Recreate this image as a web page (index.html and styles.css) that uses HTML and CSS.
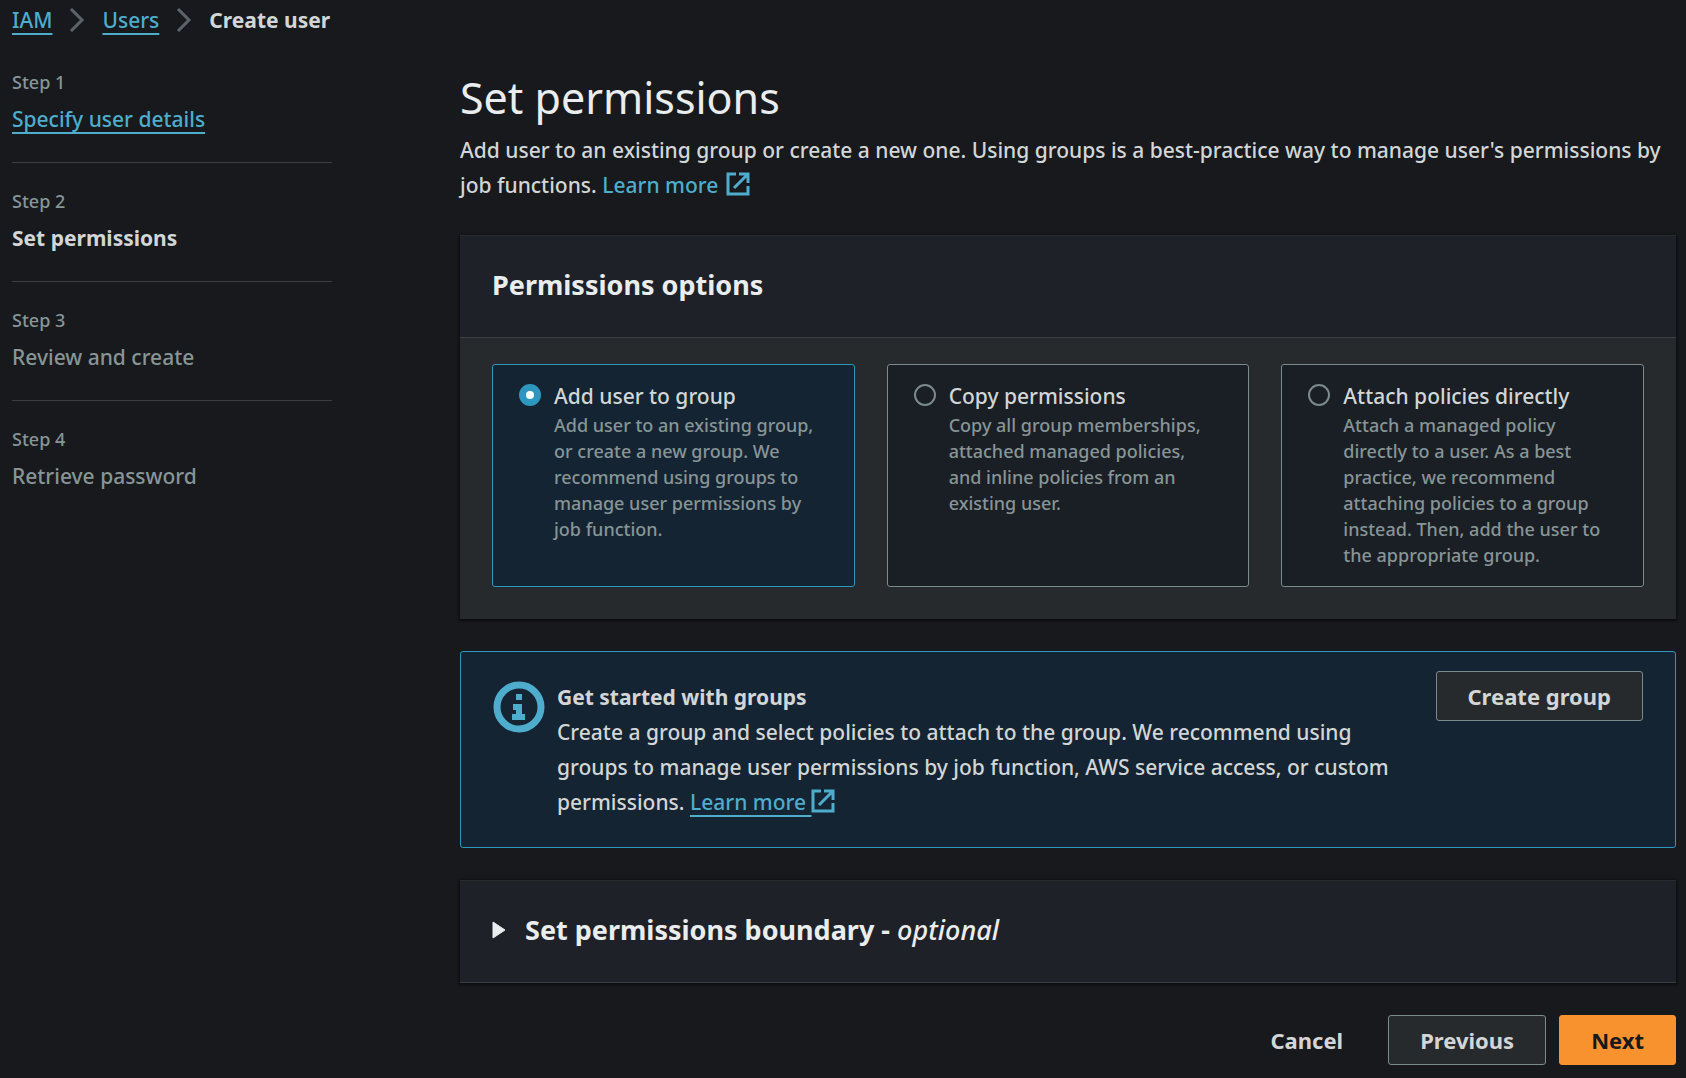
FILE: index.html
```html
<!DOCTYPE html>
<html lang="en">
<head>
<meta charset="utf-8">
<meta name="viewport" content="width=device-width, initial-scale=1">
<title>Create user | IAM</title>
<link rel="stylesheet" href="styles.css">
</head>
<body>
<svg class="sprite" aria-hidden="true">
  <symbol id="chevron" viewBox="0 0 16 24"><path d="M2 1 L13 12 L2 23" fill="none" stroke="currentColor" stroke-width="3"/></symbol>
  <symbol id="external" viewBox="0 0 24 24"><path d="M10 2 H2 V22 H22 V14 M13 2 H22 V11 M22 2 L8 16" fill="none" stroke="currentColor" stroke-width="3"/></symbol>
</svg>

<nav class="breadcrumbs" aria-label="Breadcrumbs">
  <a class="link" href="#iam">IAM</a>
  <svg class="chevron" aria-hidden="true"><use href="#chevron"/></svg>
  <a class="link" href="#users">Users</a>
  <svg class="chevron" aria-hidden="true"><use href="#chevron"/></svg>
  <span class="current">Create user</span>
</nav>

<div class="wizard">
  <ol class="steps">
    <li class="step"><span class="step-number">Step 1</span><a class="step-name link" href="#details">Specify user details</a></li>
    <li class="step"><span class="step-number">Step 2</span><span class="step-name current">Set permissions</span></li>
    <li class="step"><span class="step-number">Step 3</span><span class="step-name">Review and create</span></li>
    <li class="step"><span class="step-number">Step 4</span><span class="step-name">Retrieve password</span></li>
  </ol>

  <main class="content">
    <header class="intro">
      <h1>Set permissions</h1>
      <p>Add user to an existing group or create a new one. Using groups is a best-practice way to manage user's permissions by job functions. <a class="more" href="#learn">Learn more <svg class="external" aria-hidden="true"><use href="#external"/></svg></a></p>
    </header>

    <section class="panel">
      <h2 class="panel-header">Permissions options</h2>
      <div class="tiles">
        <label class="tile">
          <input class="radio" type="radio" name="permissions" checked>
          <span class="tile-text"><span class="tile-title">Add user to group</span><span class="tile-note">Add user to an existing group, or create a new group. We recommend using groups to manage user permissions by job function.</span></span>
        </label>
        <label class="tile">
          <input class="radio" type="radio" name="permissions">
          <span class="tile-text"><span class="tile-title">Copy permissions</span><span class="tile-note">Copy all group memberships, attached managed policies, and inline policies from an existing user.</span></span>
        </label>
        <label class="tile">
          <input class="radio" type="radio" name="permissions">
          <span class="tile-text"><span class="tile-title">Attach policies directly</span><span class="tile-note">Attach a managed policy directly to a user. As a best practice, we recommend attaching policies to a group instead. Then, add the user to the appropriate group.</span></span>
        </label>
      </div>
    </section>

    <section class="alert">
      <svg class="info" viewBox="0 0 52 52" aria-hidden="true">
        <circle cx="26" cy="26" r="22" fill="none" stroke="currentColor" stroke-width="7"/>
        <path d="M23 13h6v6h-6zM20 23h9v10h3v6H19v-6h4v-4h-3z" fill="currentColor"/>
      </svg>
      <div class="alert-text">
        <strong>Get started with groups</strong>
        <p>Create a group and select policies to attach to the group. We recommend using groups to manage user permissions by job function, AWS service access, or custom permissions. <a class="more" href="#groups"><span class="link">Learn more </span><svg class="external" aria-hidden="true"><use href="#external"/></svg></a></p>
      </div>
      <button class="button" type="button">Create group</button>
    </section>

    <section class="panel">
      <h2 class="panel-header">
        <button class="expander" type="button" aria-expanded="false">
          <svg class="caret" viewBox="0 0 14 18" aria-hidden="true"><path d="M1 1 L13 9 L1 17 Z" fill="currentColor" stroke="currentColor" stroke-linejoin="round"/></svg>
          <span>Set permissions boundary - <em>optional</em></span>
        </button>
      </h2>
    </section>

    <footer class="actions">
      <button class="button plain" type="button">Cancel</button>
      <button class="button" type="button">Previous</button>
      <button class="button primary" type="button">Next</button>
    </footer>
  </main>
</div>
</body>
</html>
```
FILE: styles.css
```css
* { box-sizing: border-box; }

body {
  margin: 0;
  padding: 0 10px 12px 12px;
  background: #17191c;
  color: #d2d6d6;
  font-family: "Noto Sans", "Open Sans", sans-serif;
  font-size: 21px;
  font-weight: 500;
  line-height: 35px;
}

h1, h2, p, ol { margin: 0; padding: 0; }

button { font: inherit; color: inherit; cursor: pointer; }

.sprite { position: absolute; width: 0; height: 0; }

.link {
  color: #4eadcc;
  text-decoration: underline 2px;
  text-underline-offset: 5px;
  text-decoration-skip-ink: none;
}

.current { color: #d2d6d6; font-weight: 700; }

.breadcrumbs { display: flex; align-items: center; gap: 17px; height: 40px; }
.chevron { width: 16px; height: 24px; color: #5c636b; }

.wizard {
  display: grid;
  grid-template-columns: 320px minmax(0, 1fr);
  column-gap: 128px;
}

.steps { list-style: none; padding-top: 27px; }
.step { display: flex; flex-direction: column; align-items: flex-start; gap: 5px; color: #879596; }
.step + .step { margin-top: 25px; padding-top: 23px; border-top: 1px solid #3b3e43; }
.step-number { font-size: 18px; line-height: 30px; }

.content { display: flex; flex-direction: column; gap: 32px; padding-top: 27px; }

.intro h1 { color: #eaeded; font-size: 43px; font-weight: 400; line-height: 62px; padding-bottom: 4px; }

.more { color: #4eadcc; text-decoration: none; }
.external { width: 24px; height: 24px; vertical-align: -3px; }
.intro .external { margin-left: 2px; }

.panel {
  background: #262a2c;
  border-top: 1px solid #292c2e;
  box-shadow: 0 1px 2px 1px #0b0c0e;
}
.panel-header {
  padding: 30px 32px 34px;
  background: #1f2129;
  border-bottom: 1px solid #3b3e43;
  color: #eaeded;
  font-size: 27px;
  font-weight: 700;
  line-height: 37px;
}

.tiles {
  display: grid;
  grid-template-columns: repeat(3, minmax(0, 1fr));
  gap: 32px;
  padding: 26px 32px 32px;
}
.tile {
  display: flex;
  gap: 13px;
  padding: 15px 32px 18px 26px;
  background: #1a1e25;
  border: 1px solid #7b8a8b;
  border-radius: 3px;
}
.tile:has(:checked) { background: #152432; border-color: #2e97bf; }
.tile-title, .tile-note { display: block; }
.tile-title { line-height: 32px; }
.tile-note { color: #879596; font-size: 18px; line-height: 26px; }

.radio {
  appearance: none;
  flex: none;
  width: 22px;
  height: 22px;
  margin: 4px 0 0;
  border: 2px solid #7b8a8b;
  border-radius: 50%;
}
.radio:checked { border: 7px solid #2e97bf; background: #fff; }

.alert {
  display: flex;
  align-items: flex-start;
  gap: 12px;
  padding: 19px 32px 27px;
  background: #152432;
  border: 1px solid #2e97bf;
  border-radius: 3px;
}
.info { flex: none; width: 52px; height: 52px; margin-top: 10px; color: #4eadcc; }
.alert-text { flex: 1; padding: 9px 20px 0 0; }

.button {
  height: 50px;
  padding: 0 31px;
  background: #262a2c;
  border: 1px solid #7b8a8b;
  border-radius: 3px;
  font-size: 22px;
  font-weight: 700;
}
.plain { background: none; border-color: transparent; }
.primary { background: #f7922f; border-color: #f7922f; color: #17191c; }

.expander { display: flex; align-items: center; gap: 19px; padding: 0; background: none; border: 0; }
.caret { width: 14px; height: 18px; }
.expander em { font-weight: 500; }

.actions { display: flex; justify-content: flex-end; gap: 13px; }
```
